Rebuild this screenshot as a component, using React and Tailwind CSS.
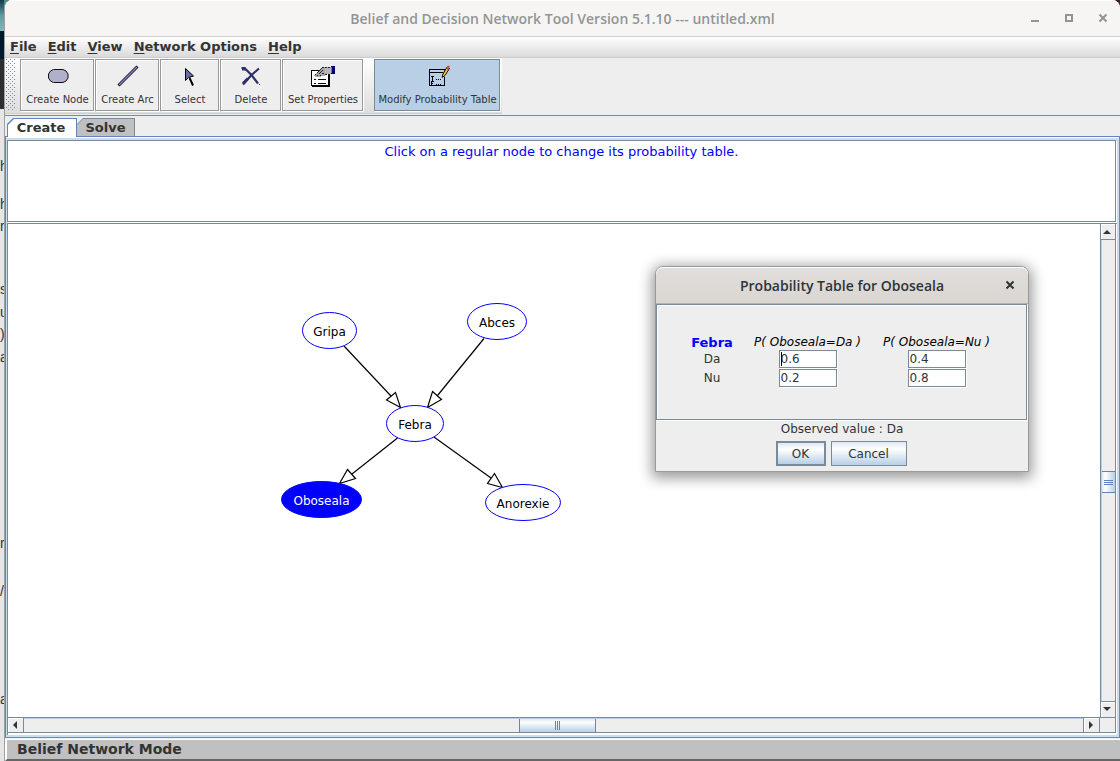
import React from "react";

const menus = ["File", "Edit", "View", "Network Options", "Help"];

const nodes = [
  { name: "Gripa", cx: 329.5, cy: 330.5, rx: 27 },
  { name: "Abces", cx: 497, cy: 321.5, rx: 29.5 },
  { name: "Febra", cx: 415, cy: 423.5, rx: 28.5 },
  { name: "Oboseala", cx: 321.5, cy: 499.5, rx: 40, selected: true },
  { name: "Anorexie", cx: 523, cy: 502.5, rx: 37.5 },
];

const arcs = [
  { line: "M344 346 L391 396", head: "386.5,400 395.5,392.5 400.5,407.5" },
  { line: "M484 338.5 L437.500 395.5", head: "432.5,391.5 441.5,399.5 427.5,407.5" },
  { line: "M397.5 438 L352 474", head: "347.5,469.5 355.5,478.5 339.5,483.5" },
  { line: "M434 437 L491 478", head: "494.5,473.500 487.5,483.5 502.5,487.5" },
];

const rows = [
  { value: "Da", p: ["0.6", "0.4"] },
  { value: "Nu", p: ["0.2", "0.8"] },
];

function NodeIcon() {
  return (
    <svg width="22" height="22" viewBox="0 0 22 22">
      <path d="M6.500 4.500h9.500l3 1.500 2 3v4l-2 3-3 1.500h-9.500l-3-1.500-2-3v-4l2-3z" fill="#b0b0cc" stroke="#111" />
    </svg>
  );
}

function ArcIcon() {
  return (
    <svg width="22" height="22" viewBox="0 0 22 22">
      <path d="M1.500 20.500L20.500 1.500" stroke="#000" strokeWidth="3" />
      <path d="M2 20L20 2" stroke="#8c8cdc" strokeWidth="1.500" />
    </svg>
  );
}

function SelectIcon() {
  return (
    <svg width="22" height="22" viewBox="0 0 22 22">
      <path d="M6.500 3.500v12l3-3 5-1.500z" fill="#6a6aa8" stroke="#000" />
      <path d="M10.500 13l1.500 3 2 4.500" stroke="#000" strokeWidth="2" fill="none" />
    </svg>
  );
}

function DeleteIcon() {
  return (
    <svg width="22" height="22" viewBox="0 0 22 22" fill="none" stroke="#303068">
      <path d="M1.500 3h3l7 7 6.500 8.500" strokeWidth="2.200" />
      <path d="M19 3.500l-7.500 6.500-8.500 9.500" strokeWidth="2.200" />
      <path d="M3 18.500l5-5M2 4h4" strokeWidth="3" />
      <path d="M19 19.500h1" strokeWidth="1" />
    </svg>
  );
}

function PropertiesIcon() {
  return (
    <svg width="26" height="22" viewBox="0 0 26 22" shapeRendering="crispEdges">
      <path d="M1.500 5.500h17v15h-17z" fill="#fff" stroke="#000" strokeWidth="1" />
      <path d="M2 21h17.500M19 8v13" stroke="#000" strokeWidth="2" />
      <path d="M4 14.500h2M8 14.500h8M4 18.500h2M8 18.500h8" stroke="#000" strokeWidth="1" />
      <path d="M4 11l3-4 4-4 3-1.500h7v7h-4l-3 3-2-1-2 2-2-1-2 1z" fill="#a8a8a8" />
      <path d="M5 10l7-7M7 11l6-6M10 11l4-3M12 2.500h8M15 9.500h6" stroke="#222" strokeDasharray="2 1" />
      <path d="M15 3h6v5h-6z" fill="#b8b8b8" />
      <path d="M21 1h4v8h-4z" fill="#000078" />
      <path d="M21.500 2v6" stroke="#7878c0" />
    </svg>
  );
}

function TableIcon() {
  return (
    <svg width="24" height="22" viewBox="0 0 24 22">
      <g shapeRendering="crispEdges" stroke="#000" fill="none">
        <path d="M3.500 4.500h15v16h-15zM3 7.500h16" />
        <path d="M5 11.500h3M6.500 11.500v4M10 14.500h1M12 14.500h1M14 14.500h1" />
        <path d="M5.500 20v-3M5 16.500h3M5 18.500h2M10 19.500h1M12 19.500h1M14 19.500h1" />
      </g>
      <path d="M15 14l1.500-5 5-8 3 2-5 8z" fill="#fff" />
      <path d="M16 12.500l1-3.500 4-7 2.500 1.500-4.500 7z" fill="#f0c850" stroke="#000" />
      <path d="M20 3.500l2-3 2 1-2 3.500z" fill="#d04848" />
    </svg>
  );
}

const tools = [
  { label: "Create Node", width: "w-[74px]", Icon: NodeIcon },
  { label: "Create Arc", width: "w-[64px]", Icon: ArcIcon },
  { label: "Select", width: "w-[59px]", Icon: SelectIcon },
  { label: "Delete", width: "w-[61px]", Icon: DeleteIcon },
  { label: "Set Properties", width: "w-[81px]", Icon: PropertiesIcon },
];

function ToolButton({ label, width, Icon, active }) {
  return (
    <button
      type="button"
      aria-pressed={!!active}
      className={`flex h-[52px] shrink-0 flex-col items-center whitespace-nowrap border pl-px pt-[5px] text-[10px] leading-[14px] ${width} ${
        active
          ? "border-[#7a8a99] bg-[#b8cfe5] shadow-[1px_1px_0_#fff]"
          : "border-[#999999] bg-[#eeeeee] shadow-[inset_1px_1px_0_#fff,1px_1px_0_#fff]"
      }`}
    >
      <Icon />
      <span className="mt-[6px]">{label}</span>
    </button>
  );
}

function Toolbar() {
  return (
    <div className="flex h-[58px] shrink-0 border-b border-[#7a8a99]">
      <div className="flex h-[56px] border-b border-[#cccccc] bg-linear-to-b from-white to-[#dddddd] pr-[2px]">
        <svg width="15" height="53" aria-hidden="true" shapeRendering="crispEdges">
          <defs>
            <pattern id="grip" width="4" height="4" patternUnits="userSpaceOnUse">
              <path d="M1 1h1v1h-1zM3 3h1v1h-1z" fill="#7a8a99" />
            </pattern>
          </defs>
          <rect x="1" y="1" width="10" height="52" fill="url(#grip)" />
        </svg>
        <div className="flex gap-px pt-px">
          {tools.map((t) => (
            <ToolButton key={t.label} {...t} />
          ))}
        </div>
        <div className="ml-[11px] pt-px">
          <ToolButton label="Modify Probability Table" width="w-[126px]" Icon={TableIcon} active />
        </div>
      </div>
    </div>
  );
}

function Arrow({ d }) {
  return (
    <svg width="8" height="8" viewBox="0 0 8 8" aria-hidden="true">
      <path d={d} fill="#333" />
    </svg>
  );
}

const scrollButton = "flex shrink-0 items-center justify-center bg-[#eeeeee] pr-[2px] shadow-[inset_1px_1px_0_#fff]";

function VerticalScroll() {
  return (
    <div className="flex w-[16px] shrink-0 flex-col border-x border-[#7a8a99] bg-[#eeeeee]">
      <button type="button" aria-label="Scroll up" className={`h-[16px] border-b border-[#7a8a99] ${scrollButton}`}>
        <Arrow d="M0 6L4 2L8 6z" />
      </button>
      <div className="flex flex-1 flex-col border-l border-[#b8cfe5]">
        <div className="flex-[231]" />
        <div className="flex h-[22px] flex-col items-center justify-center gap-px border-y border-[#6382bf] bg-linear-to-r from-[#dce8f4] via-white via-25% to-[#b8cfe5]">
          <div className="h-px w-[9px] bg-[#6382bf]" />
          <div className="h-px w-[9px] bg-[#6382bf]" />
          <div className="h-px w-[9px] bg-[#6382bf]" />
        </div>
        <div className="flex-[208]" />
      </div>
      <button type="button" aria-label="Scroll down" className={`h-[16px] border-t border-[#7a8a99] pb-px ${scrollButton}`}>
        <Arrow d="M0 2L4 6L8 2z" />
      </button>
    </div>
  );
}

function HorizontalScroll() {
  return (
    <div className="flex h-[16px] shrink-0 border-y border-r border-[#7a8a99] bg-[#eeeeee]">
      <button type="button" aria-label="Scroll left" className={`w-[16px] border-r border-[#7a8a99] ${scrollButton}`}>
        <Arrow d="M6 0L2 4L6 8z" />
      </button>
      <div className="flex flex-1 border-t border-[#b8cfe5]">
        <div className="flex-[495]" />
        <div className="flex w-[77px] items-center justify-center gap-px border-x border-[#6382bf] bg-linear-to-b from-[#dce8f4] via-white via-25% to-[#b8cfe5]">
          <div className="h-[9px] w-px bg-[#6382bf]" />
          <div className="h-[9px] w-px bg-[#6382bf]" />
          <div className="h-[9px] w-px bg-[#6382bf]" />
        </div>
        <div className="flex-[487]" />
      </div>
      <button type="button" aria-label="Scroll right" className={`w-[17px] border-x border-[#7a8a99] ${scrollButton}`}>
        <Arrow d="M2 0L6 4L2 8z" />
      </button>
      <div className="w-[15px]" />
    </div>
  );
}

function Network() {
  return (
    <svg width="600" height="320" viewBox="8 224 600 320" className="font-['DejaVu_Sans',sans-serif] text-[12px]">
      {arcs.map((a) => (
        <g key={a.line} stroke="#000" strokeWidth="1.200">
          <path d={a.line} fill="none" />
          <polygon points={a.head} fill="#fff" />
        </g>
      ))}
      {nodes.map((n) => (
        <g key={n.name}>
          <ellipse cx={n.cx} cy={n.cy} rx={n.rx} ry="18" fill={n.selected ? "#0000ff" : "#fff"} stroke="#0000ff" />
          <text x={n.cx} y={n.cy + 5.5} textAnchor="middle" fill={n.selected ? "#fff" : "#000"}>
            {n.name}
          </text>
        </g>
      ))}
    </svg>
  );
}

function ProbabilityDialog() {
  return (
    <div
      role="dialog"
      aria-labelledby="dialog-title"
      className="absolute left-[655px] top-[266px] flex w-[374px] flex-col rounded-t-[8px] border border-[#999999] bg-[#eeeeee] shadow-[0_3px_14px_3px_rgba(0,0,0,0.4)]"
    >
      <div className="flex h-[37px] items-center rounded-t-[7px] border-b border-[#b5afa9] bg-linear-to-b from-[#e1dedb] to-[#dad6d2] shadow-[inset_0_1px_0_#fff]">
        <div className="w-[36px]" />
        <h2 id="dialog-title" className="flex-1 text-center font-['Open_Sans',sans-serif] text-[14px] font-semibold text-[#2e3436]">
          Probability Table for Oboseala
        </h2>
        <button type="button" aria-label="Close" className="flex w-[36px] items-center justify-center">
          <svg width="10" height="10" viewBox="0 0 10 10">
            <path d="M1.500 1.500l7 7M8.500 1.500l-7 7" stroke="#2e3436" strokeWidth="2" />
          </svg>
        </button>
      </div>
      <div className="mr-px h-[116px] border border-[#7a8a99] pt-[30px] shadow-[1px_1px_0_#fff,inset_1px_1px_0_#fff]">
        <table className="ml-[24px] border-collapse text-center text-[12px] leading-[17px]">
          <thead>
            <tr className="leading-[15px]">
              <th className="w-[62px] p-0 text-[13px] font-bold text-[#0000ff]">Febra</th>
              <th className="w-[129px] p-0 font-normal italic text-black">P( Oboseala=Da )</th>
              <th className="w-[129px] p-0 font-normal italic text-black">P( Oboseala=Nu )</th>
            </tr>
          </thead>
          <tbody>
            {rows.map((r, i) => (
              <tr key={r.value} className="h-[19px]">
                <td className="p-0">{r.value}</td>
                {r.p.map((v, j) => (
                  <td key={j} className="p-0">
                    <div className="relative mx-auto h-[19px] w-[58px]">
                      <input
                        aria-label={`P(Oboseala=${rows[j].value}) given Febra=${r.value}`}
                        defaultValue={v}
                        className="block h-[18px] w-[58px] border border-[#7a8a99] bg-white pl-px text-[12px] leading-[16px] shadow-[1px_1px_0_#fff]"
                      />
                      {i === 0 && j === 0 && <span className="absolute left-[2px] top-[2px] h-[14px] w-px bg-black" />}
                    </div>
                  </td>
                ))}
              </tr>
            ))}
          </tbody>
        </table>
      </div>
      <p className="mt-[2px] text-center text-[12px] leading-[15px]">Observed value : Da</p>
      <div className="mt-[4px] flex justify-center gap-[5px] pb-[5px] pr-[2px] text-[12px]">
        <button type="button" className="h-[25px] w-[50px] border-2 border-[#7a8a99] bg-linear-to-b from-[#dde8f3] via-white via-30% to-[#b8cfe5]">
          OK
        </button>
        <button type="button" className="h-[25px] w-[76px] border border-[#7a8a99] bg-linear-to-b from-[#dde8f3] via-white via-30% to-[#b8cfe5]">
          Cancel
        </button>
      </div>
    </div>
  );
}

function Tabs() {
  return (
    <div role="tablist" className="flex h-[20px] shrink-0 items-end pl-[2px] text-[13px] font-bold leading-[17px]">
      <button type="button" role="tab" aria-selected="true" className="relative z-10 -mb-px h-[19px] w-[70px] bg-[#6382bf] p-px pb-0 [clip-path:polygon(6px_0,100%_0,100%_100%,0_100%,0_6px)]">
        <span className="block h-[18px] bg-white pr-[2px] [clip-path:polygon(6px_0,100%_0,100%_100%,0_100%,0_6px)]">Create</span>
      </button>
      <button type="button" role="tab" aria-selected="false" className="h-[18px] w-[58px] bg-[#7a8a99] pr-px pt-px [clip-path:polygon(6px_0,100%_0,100%_100%,0_100%,0_6px)]">
        <span className="block h-[17px] bg-[#c0c0c0] [clip-path:polygon(6px_0,100%_0,100%_100%,0_100%,0_6px)]">Solve</span>
      </button>
    </div>
  );
}

const behind = [
  ["h", "mt-[49px]"],
  ["h", "mt-[22px]"],
  ["r", "mt-[6px]"],
  ["s", "mt-[47px]"],
  ["u", "mt-[7px]"],
  [")", "mt-[6px]"],
  ["a", "mt-[7px]"],
  ["r", "mt-[170px]"],
  ["/", "mt-[32px]"],
  ["a", "mt-[92px]"],
];

export default function App() {
  return (
    <div className="relative flex min-h-screen bg-linear-to-r from-[#4f8a90] to-[#3a2020] font-['DejaVu_Sans',sans-serif] text-[#333333]">
      <div aria-hidden="true" className="flex w-[4px] shrink-0 flex-col overflow-hidden bg-[#e6e6e6] font-['Liberation_Sans',sans-serif] text-[14px] leading-[16px]">
        <div className="h-[31px] shrink-0 bg-linear-to-b from-[#123c48] via-[#5d9ca0] to-[#83b9b9]" />
        <div className="h-[28px] shrink-0 bg-[#00192b]" />
        <div className="h-[50px] shrink-0 bg-[#2c2f30]" />
        {behind.map(([c, m], i) => (
          <span key={i} className={`h-[16px] shrink-0 ${m}`}>
            {c}
          </span>
        ))}
      </div>

      <div className="flex min-w-0 flex-1 flex-col overflow-hidden rounded-t-[8px] border-l border-[#a0a0a0] bg-[#eeeeee]">
        <header className="flex h-[37px] shrink-0 items-center border-b border-[#d5d0cc] bg-[#f6f5f4] text-[#929595] shadow-[inset_0_1px_0_#fff]">
          <h1 className="flex-1 pl-[90px] text-center font-['Open_Sans',sans-serif] text-[14px] font-semibold">
            Belief and Decision Network Tool Version 5.1.10 --- untitled.xml
          </h1>
          <div className="flex gap-[24px] pr-[12px]">
            <button type="button" aria-label="Minimize">
              <svg width="10" height="10" viewBox="0 0 10 10"><path d="M1 8h8" stroke="#929595" strokeWidth="2" /></svg>
            </button>
            <button type="button" aria-label="Maximize">
              <svg width="10" height="10" viewBox="0 0 10 10"><path d="M2 2h6v6h-6z" fill="none" stroke="#929595" strokeWidth="2" /></svg>
            </button>
            <button type="button" aria-label="Close window">
              <svg width="10" height="10" viewBox="0 0 10 10"><path d="M1.500 1.500l7 7M8.500 1.500l-7 7" stroke="#929595" strokeWidth="2" /></svg>
            </button>
          </div>
        </header>

        <nav className="flex h-[21px] shrink-0 items-center gap-[11px] border-b border-[#cccccc] bg-linear-to-b from-white to-[#dadada] pl-[5px] text-[13px] font-bold">
          {menus.map((m) => (
            <button key={m} type="button">
              <span className="underline underline-offset-2">{m[0]}</span>
              {m.slice(1)}
            </button>
          ))}
        </nav>

        <Toolbar />
        <Tabs />

        <main className="flex flex-1 flex-col border border-[#6382bf] border-b-[#7a8a99] border-r-[#7a8a99] bg-[#c8ddf2] pb-[2px] pl-px pr-[2px] pt-[3px] shadow-[inset_0_1px_0_#fff]">
          <section className="mb-px mr-px h-[82px] shrink-0 border border-[#7a8a99] bg-white text-center text-[13px] leading-[22px] text-[#0000ff] shadow-[1px_1px_0_#fff]">
            Click on a regular node to change its probability table.
          </section>
          <section className="flex flex-1 flex-col border-l border-t border-[#7a8a99] bg-white pb-[2px] pr-px">
            <div className="flex flex-1">
              <div className="min-w-0 flex-1 overflow-hidden">
                <Network />
              </div>
              <VerticalScroll />
            </div>
            <HorizontalScroll />
          </section>
        </main>

        <footer className="mt-px h-[22px] shrink-0 border-b-2 border-l-2 border-t border-b-[#666666] border-l-white border-t-white bg-[#c0c0c0] pl-[10px] text-[14px] font-bold leading-[18px]">
          Belief Network Mode
        </footer>
      </div>

      <ProbabilityDialog />
    </div>
  );
}
